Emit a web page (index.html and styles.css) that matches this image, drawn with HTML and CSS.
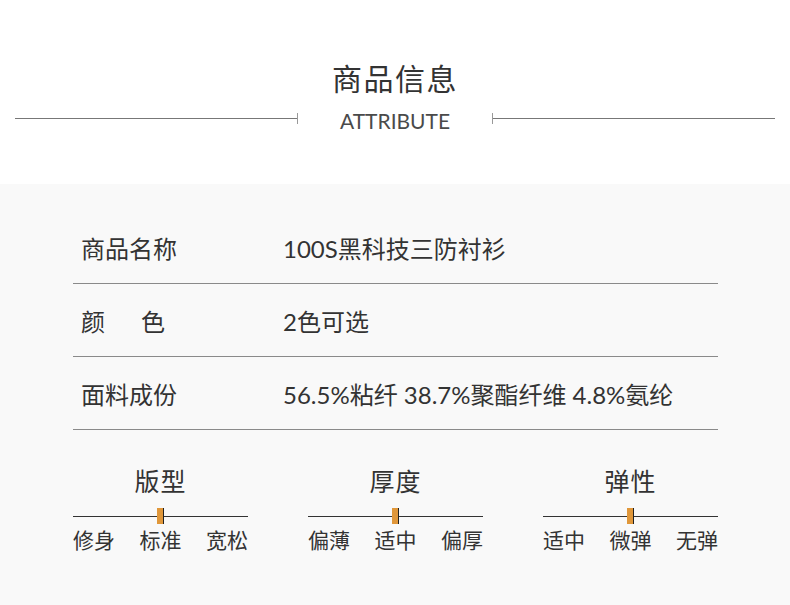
FILE: index.html
```html
<!DOCTYPE html>
<html lang="zh-CN">
<head>
<meta charset="utf-8">
<link rel="stylesheet" href="styles.css">
</head>
<body>
<header class="head">
  <h1 class="title">商品信息</h1>
  <div class="sub">
    <div class="rule rule-left"></div>
    <div class="sub-text">ATTRIBUTE</div>
    <div class="rule rule-right"></div>
  </div>
</header>
<section class="panel">
  <div class="table">
    <div class="row"><div class="label">商品名称</div><div class="value">100S黑科技三防衬衫</div></div>
    <div class="row"><div class="label">颜&emsp;&ensp;色</div><div class="value">2色可选</div></div>
    <div class="row"><div class="label">面料成份</div><div class="value">56.5%粘纤 38.7%聚酯纤维 4.8%氨纶</div></div>
  </div>
  <div class="scales">
    <div class="scale">
      <div class="scale-title">版型</div>
      <div class="track"><span class="marker"></span></div>
      <div class="ticks"><span>修身</span><span>标准</span><span>宽松</span></div>
    </div>
    <div class="scale">
      <div class="scale-title">厚度</div>
      <div class="track"><span class="marker"></span></div>
      <div class="ticks"><span>偏薄</span><span>适中</span><span>偏厚</span></div>
    </div>
    <div class="scale">
      <div class="scale-title">弹性</div>
      <div class="track"><span class="marker"></span></div>
      <div class="ticks"><span>适中</span><span>微弹</span><span>无弹</span></div>
    </div>
  </div>
</section>
</body>
</html>
```
FILE: styles.css
```css
html, body {
  margin: 0;
  padding: 0;
  background: #ffffff;
  font-family: "Noto Sans CJK SC", "Noto Sans", sans-serif;
  color: #333333;
}
.head {
  height: 184px;
  box-sizing: border-box;
  padding-top: 58px;
}
.title {
  margin: 0;
  text-align: center;
  font-size: 30px;
  line-height: 38px;
  font-weight: 400;
  color: #333333;
  letter-spacing: 1.5px;
}
.sub {
  display: flex;
  align-items: center;
  padding: 0 15px;
  margin-top: 8px;
  height: 28px;
}
.rule {
  flex: 1;
  height: 1px;
  background: #777777;
  position: relative;
}
.rule-left::after,
.rule-right::before {
  content: "";
  position: absolute;
  top: -5px;
  width: 1px;
  height: 11px;
  background: #999999;
}
.rule-left::after { right: 0; }
.rule-right::before { left: 0; }
.sub-text {
  width: 194px;
  text-align: center;
  font-family: "Lato", "Noto Sans", sans-serif;
  font-size: 21px;
  line-height: 28px;
  padding-top: 5px;
  color: #4a4a4a;
}
.panel {
  background: #f9f9f9;
  height: 421px;
  box-sizing: border-box;
  padding: 27px 72px 0 73px;
}
.row {
  display: flex;
  align-items: center;
  height: 72px;
  border-bottom: 1px solid #8a8a8a;
  font-size: 24px;
  color: #333333;
}
.label {
  width: 202px;
  padding-left: 8px;
}
.value {
  font-family: "Lato", "Noto Sans CJK SC", sans-serif;
}
.scales {
  display: flex;
  gap: 60px;
  margin-top: 35px;
}
.scale {
  width: 175px;
  display: flex;
  flex-direction: column;
}
.scale-title {
  text-align: center;
  font-size: 25px;
  line-height: 30px;
  letter-spacing: 1px;
  color: #333333;
}
.track {
  position: relative;
  height: 16px;
  margin-top: 13px;
  display: flex;
  justify-content: center;
}
.track::before {
  content: "";
  position: absolute;
  left: 0;
  right: 0;
  top: 8px;
  height: 1px;
  background: #333333;
}
.marker {
  position: relative;
  width: 6px;
  height: 16px;
  background: #e0973a;
  border-right: 1.5px solid #222222;
}
.ticks {
  display: flex;
  justify-content: space-between;
  margin-top: 2px;
  font-size: 21px;
  line-height: 26px;
  color: #333333;
}
```
